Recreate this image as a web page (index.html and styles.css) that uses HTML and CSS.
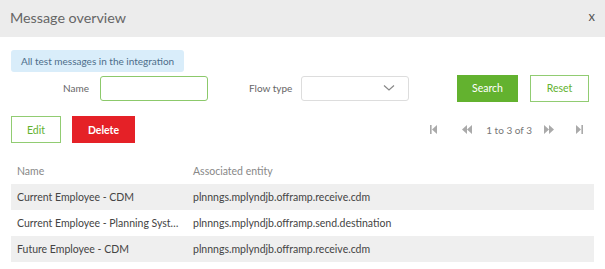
FILE: index.html
```html
<!DOCTYPE html>
<html lang="en">
<head>
    <meta charset="UTF-8">
    <meta name="viewport" content="width=device-width, initial-scale=1.0">
    <title>Message overview</title>
    <link rel="stylesheet" href="styles.css">
</head>
<body>
<div class="dialog">
    <div class="dialog-head">
        <span class="dialog-title">Message overview</span>
        <span class="close">x</span>
    </div>
    <div class="dialog-body">
        <div class="info">All test messages in the integration</div>
        <div class="filters">
            <label class="field field-name"><span>Name</span><input type="text" class="txt"></label>
            <label class="field field-flow"><span>Flow type</span>
                <div class="select">
                    <svg width="12" height="8" viewBox="0 0 12 8"><path d="M1 1.5 L6 6 L11 1.5" fill="none" stroke="#888" stroke-width="1.2"/></svg>
                </div>
            </label>
            <button class="btn btn-green">Search</button>
            <button class="btn btn-outline btn-reset">Reset</button>
        </div>
        <div class="toolbar">
            <button class="btn btn-outline btn-edit">Edit</button>
            <button class="btn btn-red">Delete</button>
            <div class="pager">
                <svg class="pg pg-first" width="8" height="9" viewBox="0 0 8 9"><rect x="0" y="0" width="1.6" height="9" fill="#aaa"/><path d="M7 0 L2 4.5 L7 9 Z" fill="#aaa"/></svg>
                <svg class="pg pg-prev" width="10" height="9" viewBox="0 0 10 9"><path d="M5 0 L0 4.5 L5 9 Z M10 0 L5 4.5 L10 9 Z" fill="#aaa"/></svg>
                <span class="pg-text">1 to 3 of 3</span>
                <svg class="pg pg-next" width="10" height="9" viewBox="0 0 10 9"><path d="M0 0 L5 4.5 L0 9 Z M5 0 L10 4.5 L5 9 Z" fill="#aaa"/></svg>
                <svg class="pg pg-last" width="8" height="9" viewBox="0 0 8 9"><path d="M1 0 L6 4.5 L1 9 Z" fill="#aaa"/><rect x="6.4" y="0" width="1.6" height="9" fill="#aaa"/></svg>
            </div>
        </div>
        <table class="grid">
            <thead>
                <tr><th class="col-name">Name</th><th>Associated entity</th></tr>
            </thead>
            <tbody>
                <tr><td>Current Employee - CDM</td><td>plnnngs.mplyndjb.offramp.receive.cdm</td></tr>
                <tr><td>Current Employee - Planning Syst…</td><td>plnnngs.mplyndjb.offramp.send.destination</td></tr>
                <tr><td>Future Employee - CDM</td><td>plnnngs.mplyndjb.offramp.receive.cdm</td></tr>
            </tbody>
        </table>
    </div>
</div>
</body>
</html>
```
FILE: styles.css
```css
* {
    box-sizing: border-box;
}

body {
    margin: 0;
    background: #fff;
    font-family: "Lato", "Liberation Sans", sans-serif;
    color: #444;
}

.dialog {
    width: 605px;
    height: 269px;
    overflow: hidden;
}

.dialog-head {
    height: 37px;
    background: #ececec;
    display: flex;
    align-items: center;
    justify-content: space-between;
    padding: 0 10px 2px 10px;
}

.dialog-title {
    font-size: 14.3px;
    color: #666;
}

.close {
    font-size: 13px;
    color: #555;
    margin-top: -3px;
}

.dialog-body {
    padding: 12px 11px 0 11px;
}

.info {
    display: inline-block;
    background: #d9edfa;
    color: #4d6e8a;
    font-size: 10px;
    height: 22px;
    line-height: 22px;
    padding: 0 10px;
    border-radius: 3px;
}

.filters {
    display: flex;
    align-items: center;
    margin-top: 3px;
    height: 26px;
}

.field {
    display: flex;
    align-items: center;
    font-size: 10px;
    color: #666;
}

.field-name {
    margin-left: 52px;
}

.field-name span {
    width: 37px;
}

.field-flow {
    margin-left: 41px;
}

.field-flow span {
    width: 52px;
}

.txt {
    width: 108px;
    height: 25px;
    border: 1px solid #8cc96b;
    border-radius: 3px;
    outline: none;
}

.select {
    width: 108px;
    height: 25px;
    border: 1px solid #ddd;
    border-radius: 3px;
    display: flex;
    align-items: center;
    justify-content: flex-end;
    padding-right: 13px;
}

.btn {
    height: 27px;
    font-family: inherit;
    font-size: 10.5px;
    border-radius: 0;
    padding: 0;
}

.btn-green {
    width: 61px;
    margin-left: 48px;
    background: #63b22f;
    border: 1px solid #63b22f;
    color: #fff;
}

.btn-outline {
    background: #fff;
    border: 1px solid #91cc72;
    color: #63b22f;
}

.btn-reset {
    width: 59px;
    margin-left: 12px;
}

.toolbar {
    display: flex;
    align-items: center;
    margin-top: 15px;
}

.btn-edit {
    width: 50px;
}

.btn-red {
    width: 63px;
    margin-left: 11px;
    background: #e52127;
    border: 1px solid #e52127;
    color: #fff;
    font-weight: bold;
}

.pager {
    display: flex;
    align-items: center;
    margin-left: auto;
    margin-right: 11px;
    font-size: 10px;
    color: #777;
}

.pg-first {
    margin-right: 24px;
}

.pg-text {
    margin: 0 12px 0 14px;
}

.pg-next {
    margin-right: 21px;
}

.grid {
    width: 583px;
    margin-top: 17px;
    border-collapse: collapse;
    font-size: 10.5px;
}

.grid th {
    text-align: left;
    font-weight: normal;
    color: #888;
    height: 24px;
    padding: 0 6px;
    vertical-align: top;
    padding-top: 5px;
}

.col-name {
    width: 176px;
}

.grid td {
    height: 26px;
    padding: 0 6px;
    color: #444;
}

.grid tbody tr:nth-child(odd) {
    background: #efefef;
}
```
